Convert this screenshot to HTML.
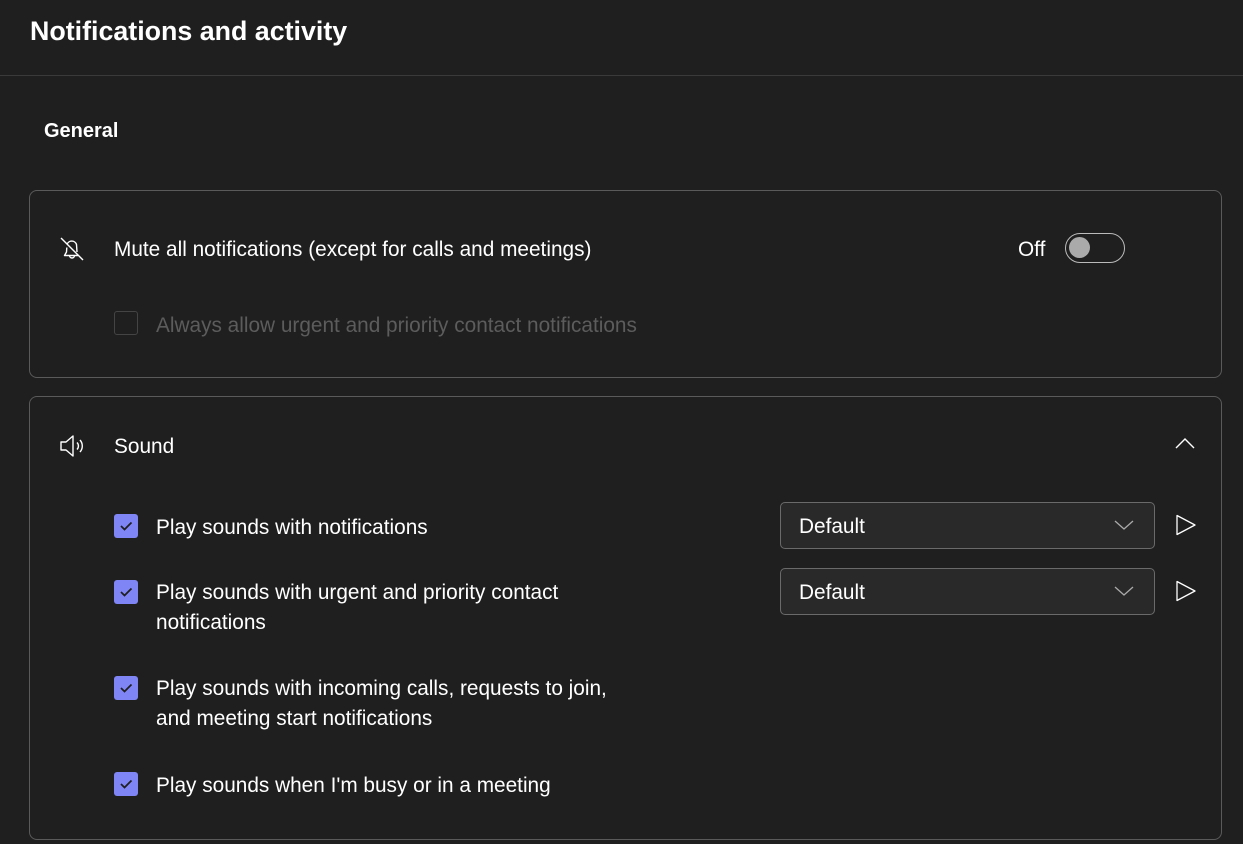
<!DOCTYPE html>
<html><head><style>
body{margin:0;width:1243px;height:844px;background:#1f1f1f;font-family:"Liberation Sans",sans-serif;color:#fff;position:relative;overflow:hidden}
.a{position:absolute;white-space:nowrap}
.t{font-size:20.8px}
.card{position:absolute;left:29px;width:1193px;border:1px solid #5a5a5a;border-radius:8px;box-sizing:border-box}
.cb{position:absolute;width:24px;height:24px;border-radius:3px;background:#7f85f5}
.sel{position:absolute;left:780px;width:375px;height:47px;border:1px solid #6a6a6a;border-radius:5px;background:#292929;box-sizing:border-box}
</style></head><body>
<div class="a" style="left:30px;top:16px;font-size:26.8px;font-weight:bold">Notifications and activity</div>
<div class="a" style="left:0;top:75px;width:1243px;height:1px;background:#3a3a3a"></div>
<div class="a" style="left:44px;top:120px;font-size:20px;font-weight:bold">General</div>

<div class="card" style="top:190px;height:188px"></div>
<svg class="a" style="left:58px;top:235px" width="28" height="28" viewBox="0 0 28 28" fill="none" stroke="#fff" stroke-width="1.4" stroke-linejoin="round"><path d="M9 9.5A5 5 0 0 1 18.5 9.5L19 17M8.8 12.5L8.5 17L6.5 20.5H20"/><path d="M11.5 20.5a2.5 2.5 0 0 0 5 0"/><path d="M3 3l22 22"/></svg>
<div class="a t" style="left:114px;top:238px">Mute all notifications (except for calls and meetings)</div>
<div class="a t" style="left:1018px;top:238px">Off</div>
<div class="a" style="left:1065px;top:233px;width:58px;height:28px;border:1px solid #bbb;border-radius:15px"></div>
<div class="a" style="left:1069px;top:237px;width:21px;height:21px;border-radius:50%;background:#aaa"></div>
<div class="a" style="left:114px;top:311px;width:24px;height:24px;border:1px solid #444;border-radius:3px;box-sizing:border-box"></div>
<div class="a t" style="left:156px;top:314px;color:#5c5c5c">Always allow urgent and priority contact notifications</div>

<div class="card" style="top:396px;height:444px"></div>
<svg class="a" style="left:58px;top:432px" width="28" height="28" viewBox="0 0 28 28" fill="none" stroke="#fff" stroke-width="1.4" stroke-linejoin="round"><path d="M3 10h5l7-6v20l-7-6H3z"/><path d="M19 10.5a5 5 0 0 1 0 7M22 8a9 9 0 0 1 0 12"/></svg>
<div class="a t" style="left:114px;top:435px">Sound</div>
<svg class="a" style="left:1174px;top:435px" width="22" height="16" viewBox="0 0 22 16" fill="none" stroke="#fff" stroke-width="1.4"><path d="M2 13l9-9 9 9"/></svg>

<div class="cb" style="left:114px;top:514px"></div><svg class="a" style="left:114px;top:514px" width="24" height="24"><path d="M7 12l3.5 3.5 7-7" stroke="#1f1f1f" stroke-width="1.7" fill="none"/></svg>
<div class="a t" style="left:156px;top:516px">Play sounds with notifications</div>
<div class="cb" style="left:114px;top:580px"></div><svg class="a" style="left:114px;top:580px" width="24" height="24"><path d="M7 12l3.5 3.5 7-7" stroke="#1f1f1f" stroke-width="1.7" fill="none"/></svg>
<div class="a t" style="left:156px;line-height:30px;top:578px">Play sounds with urgent and priority contact<br>notifications</div>
<div class="cb" style="left:114px;top:676px"></div><svg class="a" style="left:114px;top:676px" width="24" height="24"><path d="M7 12l3.5 3.5 7-7" stroke="#1f1f1f" stroke-width="1.7" fill="none"/></svg>
<div class="a t" style="left:156px;top:674px;line-height:30px">Play sounds with incoming calls, requests to join,<br>and meeting start notifications</div>
<div class="cb" style="left:114px;top:772px"></div><svg class="a" style="left:114px;top:772px" width="24" height="24"><path d="M7 12l3.5 3.5 7-7" stroke="#1f1f1f" stroke-width="1.7" fill="none"/></svg>
<div class="a t" style="left:156px;top:774px">Play sounds when I'm busy or in a meeting</div>

<div class="sel" style="top:502px"></div>
<div class="a t" style="left:799px;top:515px">Default</div>
<svg class="a" style="left:1113px;top:518px" width="22" height="14"><path d="M2 3l9 8 9-8" stroke="#aaa" stroke-width="1.3" fill="none"/></svg>
<svg class="a" style="left:1174px;top:513px" width="24" height="24"><path d="M3 2.5v19l18-9.5z" stroke="#fff" stroke-width="1.3" fill="none" stroke-linejoin="round"/></svg>
<div class="sel" style="top:568px"></div>
<div class="a t" style="left:799px;top:581px">Default</div>
<svg class="a" style="left:1113px;top:584px" width="22" height="14"><path d="M2 3l9 8 9-8" stroke="#aaa" stroke-width="1.3" fill="none"/></svg>
<svg class="a" style="left:1174px;top:579px" width="24" height="24"><path d="M3 2.5v19l18-9.5z" stroke="#fff" stroke-width="1.3" fill="none" stroke-linejoin="round"/></svg>
</body></html>
